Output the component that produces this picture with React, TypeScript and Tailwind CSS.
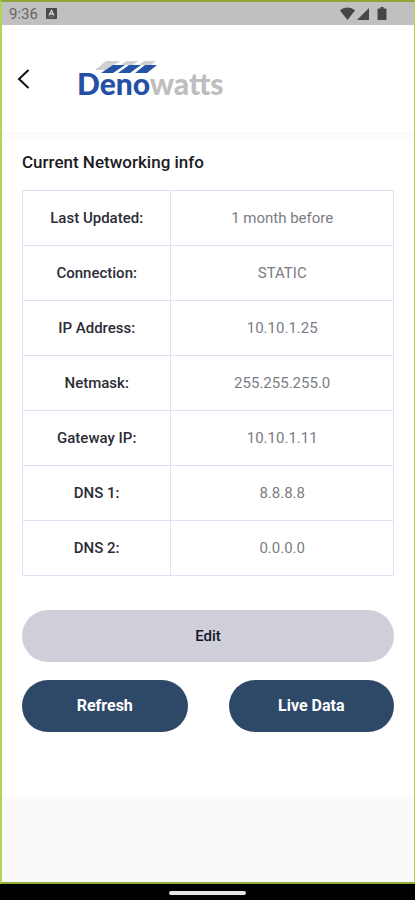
const rows = [
  { label: 'Last Updated:', value: '1 month before' },
  { label: 'Connection:', value: 'STATIC' },
  { label: 'IP Address:', value: '10.10.1.25' },
  { label: 'Netmask:', value: '255.255.255.0' },
  { label: 'Gateway IP:', value: '10.10.1.11' },
  { label: 'DNS 1:', value: '8.8.8.8' },
  { label: 'DNS 2:', value: '0.0.0.0' },
];

function StatusBar() {
  return (
    <div className="flex h-[23px] items-center justify-between bg-[#c0c0c0] pl-[7px] pr-[27px] text-[#454545]">
      <div className="flex items-center gap-2">
        <span className="text-[15px] leading-5 text-[#666]">9:36</span>
        <svg className="h-[11px] w-[11px]" viewBox="0 0 11 11" aria-hidden="true">
          <rect width="11" height="11" rx="1" fill="#4a4a4a" />
          <path d="M3 7.5 5.5 2.5 8 7.5M4 6h3" fill="none" stroke="#d0d0d0" strokeWidth="1.3" />
          <path d="M2.5 9h6" stroke="#777" strokeWidth="1" />
        </svg>
      </div>
      <svg className="h-[14px] w-[48px]" viewBox="0 0 48 14" fill="currentColor" aria-hidden="true">
        <path d="M1 3.500C5-.4 12-.4 16 3.500L8.500 13Z" />
        <path d="M30 1v12H18Z" />
        <path d="M41.500 0h3v1.500h2q1 0 1 1V12q0 1-1 1h-7q-1 0-1-1V2.500q0-1 1-1h2Z" />
      </svg>
    </div>
  );
}

function Logo() {
  return (
    <div className="relative">
      <svg className="absolute left-[17px] top-1 h-[13px] w-[64px]" viewBox="0 0 64 13" aria-hidden="true">
        <g fill="#cfd0d2">
          <path d="M12 0h14L13 9H1Z" />
          <path d="M32 0h12l-5 4H27Z" />
          <path d="M50 0h12l-5 4H45Z" />
        </g>
        <g fill="#2453a6">
          <path d="M19 4h12L19 12H7Z" />
          <path d="M35 4h12L36 12H24Z" />
          <path d="M51 4h12L53 12H41Z" />
        </g>
      </svg>
      <p className="pt-2 font-['Lato',sans-serif] text-[30px] font-black leading-9 text-[#bdbec0]">
        <span className="text-[#2350a5]">Deno</span>watts
      </p>
    </div>
  );
}

export default function App() {
  return (
    <div className="flex min-h-screen flex-col bg-black font-['Roboto',sans-serif]">
      <div className="flex flex-1 flex-col border-2 border-r border-[#b0d64f] border-t-[#8fa53a] border-b-[#8fad35] bg-[#fafafa]">
        <StatusBar />
        <header className="flex h-[107px] items-center gap-[45px] bg-white pl-[14px]">
          <button type="button" aria-label="Back" className="flex h-8 w-4 items-center justify-center">
            <svg className="h-5 w-4" viewBox="0 0 16 20" fill="none" stroke="#111" strokeWidth="2" aria-hidden="true">
              <path d="M12.500 1 3 10l9.500 9" />
            </svg>
          </button>
          <Logo />
        </header>
        <main className="bg-white px-5 pb-[65px]">
          <div className="-mx-5 h-[14px] bg-linear-to-b from-[#f9f9f9] to-white" />
          <h1 className="mb-4 mt-1 text-[17px] font-medium leading-6 text-[#1c1c22]">Current Networking info</h1>
          <table className="w-full table-fixed border-collapse text-center text-[15px] leading-5">
            <tbody>
              {rows.map((row) => (
                <tr key={row.label} className="h-[55px]">
                  <th scope="row" className="w-2/5 border border-[#dbe3f2] font-medium text-[#2c2c36]">
                    {row.label}
                  </th>
                  <td className="border border-[#dbe3f2] text-[#7c7c84]">{row.value}</td>
                </tr>
              ))}
            </tbody>
          </table>
          <button type="button" className="mt-[34px] h-[52px] w-full rounded-full bg-[#cfcfd9] text-[15px] font-medium text-[#15152c]">
            Edit
          </button>
          <div className="mt-[18px] grid grid-cols-2 gap-[41px] text-base font-bold text-white">
            <button type="button" className="h-[52px] rounded-full bg-[#2e4968]">
              Refresh
            </button>
            <button type="button" className="h-[52px] rounded-full bg-[#2e4968]">
              Live Data
            </button>
          </div>
        </main>
      </div>
      <div className="flex h-4 items-center justify-center">
        <div className="mt-[2px] h-1 w-[77px] rounded-full bg-[#e6e6e6]" />
      </div>
    </div>
  );
}
